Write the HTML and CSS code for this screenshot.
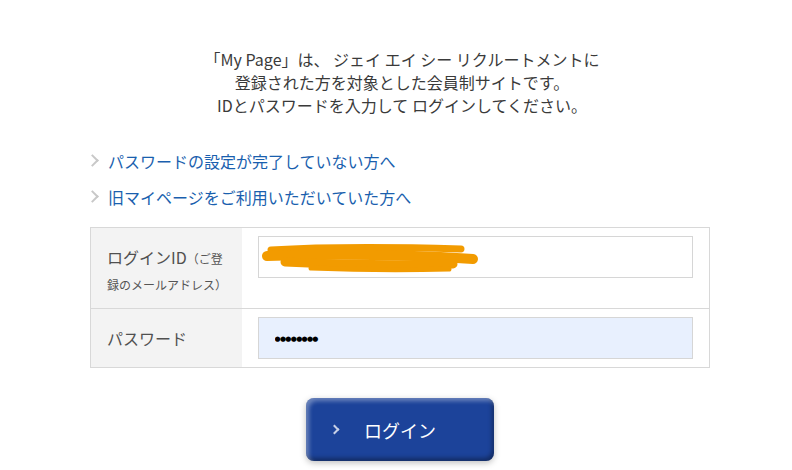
FILE: index.html
```html
<!DOCTYPE html>
<html lang="ja">
<head>
  <meta charset="UTF-8" />
  <meta name="viewport" content="width=device-width, initial-scale=1.0" />
  <title>My Page ログイン</title>
  <link rel="stylesheet" href="styles.css">
</head>
<body>
  <main class="login">
    <p class="intro">
      「My Page」は、 ジェイ エイ シー リクルートメントに<br>
      登録された方を対象とした会員制サイトです。<br>
      IDとパスワードを入力して ログインしてください。
    </p>

    <ul class="links">
      <li><a href="#">パスワードの設定が完了していない方へ</a></li>
      <li><a href="#">旧マイページをご利用いただいていた方へ</a></li>
    </ul>

    <table class="form">
      <tr class="row-id">
        <th>ログインID<small>（ご登録のメールアドレス）</small></th>
        <td>
          <div class="field">
            <input class="input" type="text" value="">
            <!-- 塗りつぶし（マスク） -->
            <svg class="mask" width="220" height="32" viewBox="0 0 220 32">
              <g stroke="#f29b00" stroke-linecap="round" fill="none">
                <path d="M10 7 C60 4 130 4 200 6" stroke-width="7"/>
                <path d="M6 13 C70 11 150 12 212 16" stroke-width="10"/>
                <path d="M24 19 C90 22 150 22 192 21" stroke-width="9"/>
                <path d="M50 25 C100 27 150 27 188 26" stroke-width="5"/>
              </g>
            </svg>
          </div>
        </td>
      </tr>
      <tr class="row-pw">
        <th>パスワード</th>
        <td><input class="input input-pw" type="text" value="●●●●●●●●"></td>
      </tr>
    </table>

    <div class="actions">
      <button class="btn-login" type="button"><span class="chev"></span>ログイン</button>
    </div>
  </main>
</body>
</html>
```

FILE: styles.css
```css
/* ===== base ===== */
* { box-sizing: border-box; margin: 0; padding: 0; }
body {
  background: #fff;
  color: #333;
  font-family: "Noto Sans CJK JP", "Noto Sans", sans-serif;
  font-size: 16px;
  padding-left: 8px;
}
.login {
  width: 620px;
  margin: 0 auto;
  padding-top: 48px;
}

/* ===== intro ===== */
.intro {
  text-align: center;
  line-height: 23px;
  color: #3a3a3a;
  margin-left: 4px;
}

/* ===== links ===== */
.links {
  list-style: none;
  margin-top: 32px;
}
.links li {
  line-height: 24px;
  margin-bottom: 12px;
  position: relative;
  padding-left: 18px;
}
.links li::before {
  content: "";
  position: absolute;
  left: -2px;
  top: 7px;
  width: 7px;
  height: 7px;
  border-top: 2px solid #c8c8c8;
  border-right: 2px solid #c8c8c8;
  transform: rotate(45deg);
}
.links a {
  color: #1a5fae;
  text-decoration: none;
}

/* ===== form table ===== */
.form {
  width: 620px;
  margin-top: 18px;
  border-collapse: collapse;
  border: 1px solid #d8d8d8;
}
.form tr + tr { border-top: 1px solid #d8d8d8; }
.form th {
  width: 151px;
  background: #f3f3f3;
  font-weight: normal;
  text-align: left;
  color: #505050;
  padding: 0 16px;
}
.row-id th {
  vertical-align: top;
  padding-top: 17px;
  padding-bottom: 11px;
  line-height: 25px;
}
.row-id th small { font-size: 12px; color: #555; }
.form td {
  padding: 8px 16px;
  vertical-align: top;
}
.field { position: relative; }
.input {
  display: block;
  width: 100%;
  height: 42px;
  border: 1px solid #d6d6d6;
  background: #fff;
  font-family: "DejaVu Sans", sans-serif;
  font-size: 16px;
  color: #000;
  padding: 0 16px;
  outline: none;
}
.input-pw {
  background: #e8f0fe;
  font-size: 7px;
  letter-spacing: -0.7px;
  padding-top: 1px;
}
.mask {
  position: absolute;
  left: 3px;
  top: 7px;
}

/* ===== button ===== */
.actions {
  display: flex;
  justify-content: center;
  padding: 30px 0 8px;
}
.btn-login {
  width: 188px;
  height: 63px;
  border: none;
  border-radius: 8px;
  background: #1c439a;
  color: #fff;
  font-family: "Noto Sans CJK JP", sans-serif;
  font-size: 18px;
  display: flex;
  align-items: center;
  padding-left: 25px;
  box-shadow:
    inset 3px 3px 4px rgba(255,255,255,.35),
    inset -2px -3px 4px rgba(0,0,0,.35),
    0 2px 6px rgba(0,0,0,.25);
  cursor: pointer;
}
.chev {
  width: 7px;
  height: 7px;
  border-top: 2px solid #c7d0e6;
  border-right: 2px solid #c7d0e6;
  transform: rotate(45deg);
  margin-right: 26px;
}
```
